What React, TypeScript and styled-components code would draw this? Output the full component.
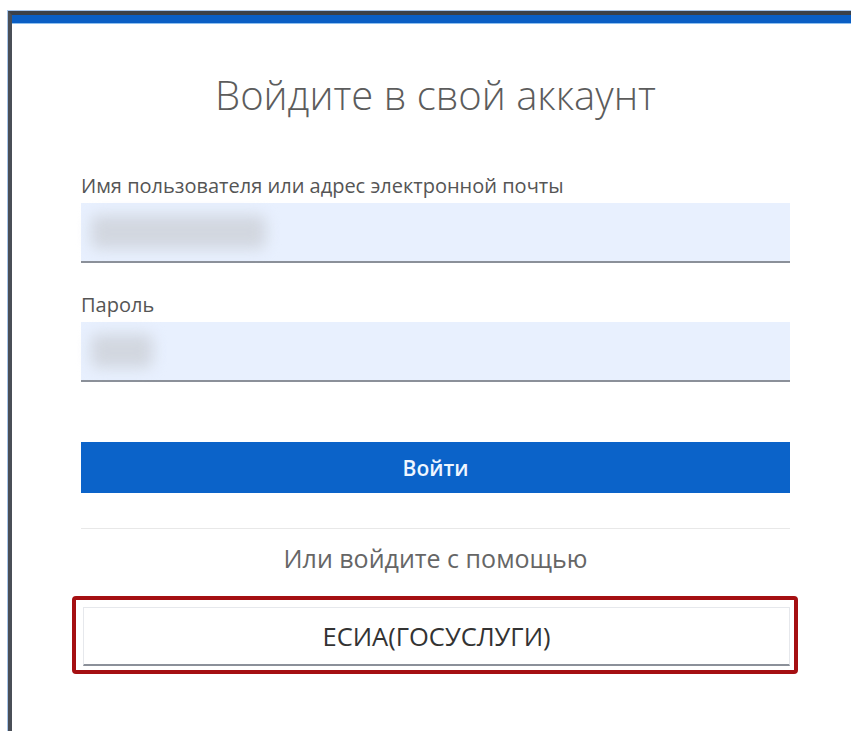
import styled, { createGlobalStyle } from "styled-components";

const GlobalStyle = createGlobalStyle`
  html, body {
    margin: 0;
    padding: 0;
    background: #ffffff;
    overflow: hidden;
  }
  body {
    font-family: "Open Sans", "Noto Sans", Arial, sans-serif;
  }
`;

const Page = styled.div`
  width: 851px;
  height: 731px;
  padding: 10px 0 0 7px;
  box-sizing: border-box;
`;

/* outer window chrome: thin light edge, dark rim, blue title strip */
const Frame = styled.div`
  border-top: 1px solid #a9c7ec;
  border-left: 1px solid #a9c7ec;
  height: 100%;
  box-sizing: border-box;
`;

const Window = styled.div`
  border-top: 4px solid #3b4048;
  border-left: 4px solid #4a4f57;
  height: 100%;
  box-sizing: border-box;
  background: #fff;
`;

const TitleStrip = styled.div`
  height: 8px;
  background: #0a5ec4;
  border-bottom: 1px solid #8ec0f0;
`;

const Form = styled.form`
  width: 709px;
  margin-left: 69px;
  display: flex;
  flex-direction: column;
`;

const Heading = styled.h1`
  margin: 47px 0 0;
  font-size: 40px;
  line-height: 48px;
  font-weight: 300;
  color: #5c5c5c;
  text-align: center;
`;

const Label = styled.label<{ $top: number }>`
  margin-top: ${(p) => p.$top}px;
  margin-bottom: 5px;
  font-size: 20px;
  line-height: 24px;
  color: #555;
`;

const Field = styled.div`
  height: 58px;
  background: #e8f0fe;
  border-bottom: 2px solid #8b9099;
  display: flex;
  align-items: center;
  padding-left: 10px;
`;

/* typed value hidden behind a soft smudge */
const Smudge = styled.span<{ $w: number }>`
  display: block;
  width: ${(p) => p.$w}px;
  height: 34px;
  background: #d2d7e0;
  border-radius: 8px;
  filter: blur(7px);
`;

const SubmitButton = styled.button`
  margin-top: 60px;
  height: 51px;
  border: none;
  background: #0b63c9;
  color: #eef6ff;
  font-family: inherit;
  font-size: 21px;
  font-weight: 600;
`;

const Divider = styled.hr`
  margin: 35px 0 0;
  border: none;
  border-top: 1px solid #e8e8e8;
`;

const AltText = styled.p`
  margin: 13px 0 0;
  font-size: 25px;
  line-height: 32px;
  color: #666;
  text-align: center;
`;

const Highlight = styled.div`
  margin: 22px -8px 0 -9px;
  border: 4px solid #a50f12;
  border-radius: 4px;
  padding: 7px 4px 4px 7px;
`;

const ProviderButton = styled.button`
  width: 100%;
  height: 59px;
  background: #fff;
  border: 1px solid #e6e8ec;
  border-bottom: 2px solid #8b9099;
  color: #333;
  font-family: inherit;
  font-size: 25.5px;
`;

export default function App() {
  return (
    <>
      <GlobalStyle />
      <Page>
        <Frame>
          <Window>
            <TitleStrip />
            <Form onSubmit={(e) => e.preventDefault()}>
              <Heading>Войдите в свой аккаунт</Heading>
              <Label $top={55}>Имя пользователя или адрес электронной почты</Label>
              <Field>
                <Smudge $w={175} />
              </Field>
              <Label $top={30}>Пароль</Label>
              <Field>
                <Smudge $w={62} />
              </Field>
              <SubmitButton type="submit">Войти</SubmitButton>
              <Divider />
              <AltText>Или войдите с помощью</AltText>
              <Highlight>
                <ProviderButton type="button">ЕСИА(ГОСУСЛУГИ)</ProviderButton>
              </Highlight>
            </Form>
          </Window>
        </Frame>
      </Page>
    </>
  );
}
